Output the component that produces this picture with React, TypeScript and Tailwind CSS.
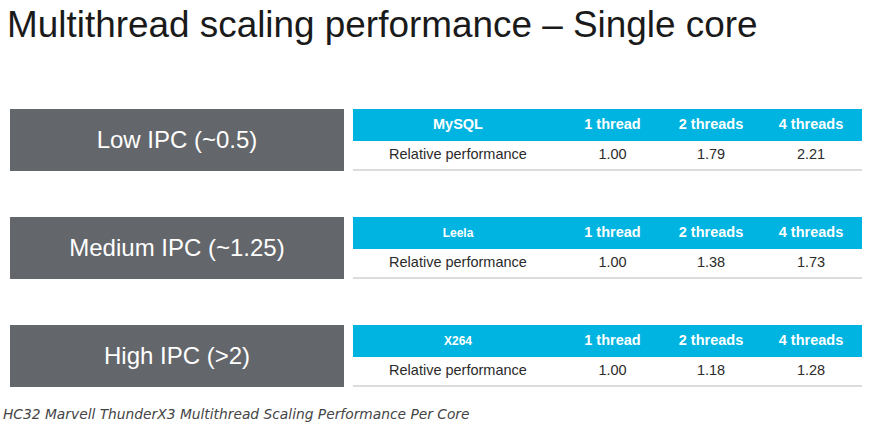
import React from 'react';

const rows = [
  { label: 'Low IPC (~0.5)', name: 'MySQL', small: false, values: ['1.00', '1.79', '2.21'] },
  { label: 'Medium IPC (~1.25)', name: 'Leela', small: true, values: ['1.00', '1.38', '1.73'] },
  { label: 'High IPC (>2)', name: 'X264', small: true, values: ['1.00', '1.18', '1.28'] },
];

export default function App() {
  return (
    <div className="w-[874px] h-[429px] bg-white overflow-hidden font-['Liberation_Sans',Arial,sans-serif]">
      <h1 className="pl-[7px] pt-[2px] text-[36.9px] leading-[46px] text-[#1a1a1a]">
        Multithread scaling performance – Single core
      </h1>

      <div className="mt-[61px] flex flex-col gap-[46px] pl-[10px]">
        {rows.map((r) => (
          <div key={r.name} className="flex gap-[9px] h-[62px]">
            <div className="w-[334px] bg-[#63666a] flex items-center justify-center text-white text-[24px]">
              {r.label}
            </div>
            <div className="w-[509px] flex flex-col">
              <div className="h-[32px] bg-[#00b4e1] flex items-center text-white font-bold text-[14.5px]">
                <div className={`w-[210px] text-center ${r.small ? 'text-[12px]' : ''}`}>{r.name}</div>
                <div className="w-[99px] text-center">1 thread</div>
                <div className="w-[98px] text-center">2 threads</div>
                <div className="w-[102px] text-center">4 threads</div>
              </div>
              <div className="flex-1 flex items-center text-[14.5px] text-[#2b2b2b] border-b-2 border-[#dcdcdc]">
                <div className="w-[210px] text-center">Relative performance</div>
                <div className="w-[99px] text-center">{r.values[0]}</div>
                <div className="w-[98px] text-center">{r.values[1]}</div>
                <div className="w-[102px] text-center">{r.values[2]}</div>
              </div>
            </div>
          </div>
        ))}
      </div>

      <p className="mt-[17px] pl-[3px] italic text-[13.8px] text-[#444] font-['DejaVu_Sans',Verdana,sans-serif]">
        HC32 Marvell ThunderX3 Multithread Scaling Performance Per Core
      </p>
    </div>
  );
}
